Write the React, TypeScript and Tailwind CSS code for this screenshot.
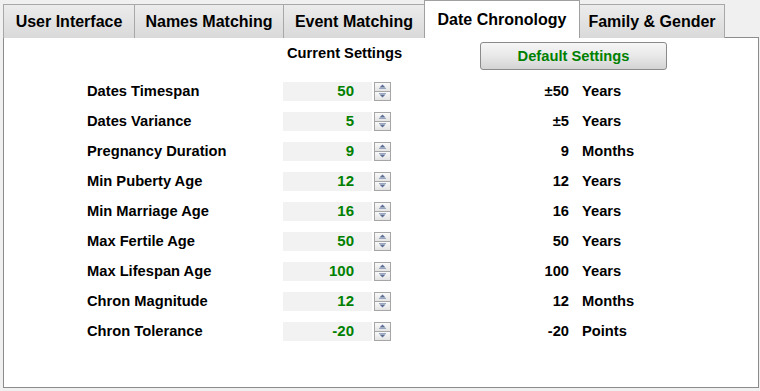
import React from "react";

const rows: [string, string, string, string][] = [
  ["Dates Timespan", "50", "±50", "Years"],
  ["Dates Variance", "5", "±5", "Years"],
  ["Pregnancy Duration", "9", "9", "Months"],
  ["Min Puberty Age", "12", "12", "Years"],
  ["Min Marriage Age", "16", "16", "Years"],
  ["Max Fertile Age", "50", "50", "Years"],
  ["Max Lifespan Age", "100", "100", "Years"],
  ["Chron Magnitude", "12", "12", "Months"],
  ["Chron Tolerance", "-20", "-20", "Points"],
];

const tabs: [string, number, boolean][] = [
  ["User Interface", 132, false],
  ["Names Matching", 150, false],
  ["Event Matching", 142, false],
  ["Date Chronology", 156, true],
  ["Family & Gender", 146, false],
];

function Arrow({ up }: { up: boolean }) {
  return (
    <svg width="9" height="5" viewBox="0 0 9 5">
      {up ? (
        <>
          <path d="M4.5 0.5 L7.5 3.5 L1.5 3.5 Z" fill="#5a6e96" />
          <line x1="1" y1="4.5" x2="8" y2="4.5" stroke="#9aa6c0" strokeWidth="1" />
        </>
      ) : (
        <>
          <line x1="1" y1="0.5" x2="8" y2="0.5" stroke="#9aa6c0" strokeWidth="1" />
          <path d="M1.5 1.5 L7.5 1.5 L4.5 4.5 Z" fill="#5a6e96" />
        </>
      )}
    </svg>
  );
}

function Spinner() {
  return (
    <div className="flex flex-col w-[17px] h-[19px] gap-0">
      <div className="flex-1 flex items-center justify-center border border-[#a6a6a6] bg-gradient-to-b from-[#fafafa] to-[#e4e4e4]">
        <Arrow up />
      </div>
      <div className="flex-1 flex items-center justify-center border border-t-0 border-[#a6a6a6] bg-gradient-to-b from-[#fafafa] to-[#e4e4e4]">
        <Arrow up={false} />
      </div>
    </div>
  );
}

export default function App() {
  return (
    <div
      className="w-[760px] h-[391px] bg-[#f0f0f0] overflow-hidden text-black"
      style={{ fontFamily: '"Liberation Sans", Arial, sans-serif' }}
    >
      <div className="flex items-end h-[38px] pl-[3px] -mb-px">
        {tabs.map(([t, w, active]) => (
          <div
            key={t}
            className={
              active
                ? "relative z-10 h-[38px] bg-white border border-b-0 border-[#a0a0a0] flex items-start justify-center pt-[7px] text-[16px] font-bold -ml-px"
                : "h-[34px] bg-gradient-to-b from-[#ececec] to-[#d9d9d9] border border-b-0 border-[#a8a8a8] flex items-center justify-center text-[16px] font-bold -ml-px first:ml-0"
            }
            style={{ width: w }}
          >
            {t}
          </div>
        ))}
      </div>
      <div className="ml-[3px] w-[756px] h-[351px] bg-white border border-[#8c8c8c]">
        <div className="flex items-start h-[38px] pt-[4px] pl-[283px]">
          <div className="w-[193px] pt-[2px] text-[14.7px] font-bold leading-[18px]">Current Settings</div>
          <div className="w-[187px] h-[28px] rounded-[3px] border border-[#8a8a8a] bg-gradient-to-b from-[#f6f6f6] via-[#e8e8e8] to-[#d4d4d4] flex items-center justify-center text-[14.7px] font-bold text-[#008000]">
            Default Settings
          </div>
        </div>
        {rows.map(([label, val, num, unit]) => (
          <div key={label} className="flex items-center h-[30px] pl-[83px] text-[14.7px] font-bold">
            <div className="w-[196px]">{label}</div>
            <div className="w-[89px] h-[19px] bg-[#f2f2f2] flex items-center justify-end pr-[18px] text-[15px] text-[#008000]">
              {val}
            </div>
            <div className="ml-[2px]">
              <Spinner />
            </div>
            <div className="w-[178px] text-right">{num}</div>
            <div className="ml-[13px]">{unit}</div>
          </div>
        ))}
      </div>
    </div>
  );
}
